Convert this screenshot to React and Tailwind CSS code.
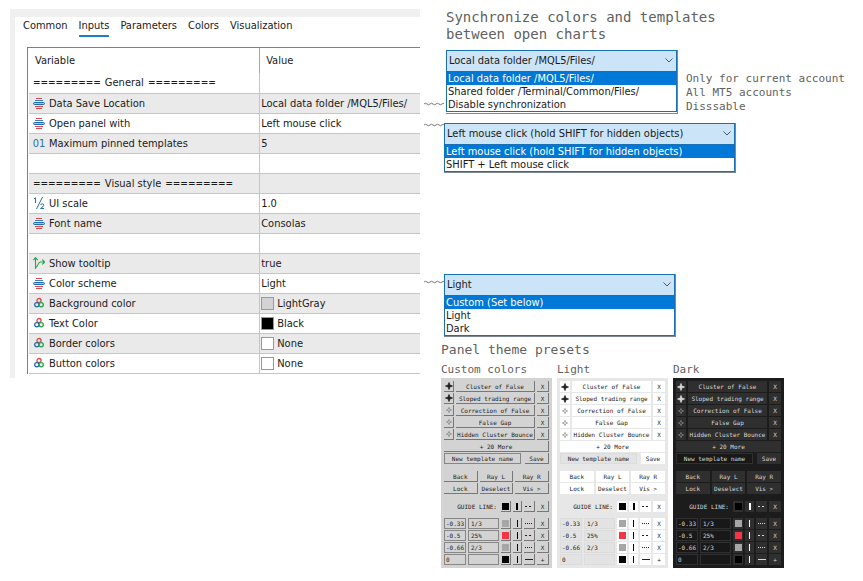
import { useState } from 'react'
import clsx from 'clsx'

const tabs = ['Common', 'Inputs', 'Parameters', 'Colors', 'Visualization']

const inputs = [
  { section: 'General' },
  { icon: 'enum', name: 'Data Save Location', value: 'Local data folder /MQL5/Files/' },
  { icon: 'enum', name: 'Open panel with', value: 'Left mouse click' },
  { icon: 'int', name: 'Maximum pinned templates', value: '5' },
  {},
  { section: 'Visual style' },
  { icon: 'double', name: 'UI scale', value: '1.0' },
  { icon: 'enum', name: 'Font name', value: 'Consolas' },
  {},
  { icon: 'bool', name: 'Show tooltip', value: 'true' },
  { icon: 'enum', name: 'Color scheme', value: 'Light' },
  { icon: 'color', name: 'Background color', value: 'LightGray', swatch: 'bg-[#d3d3d3]' },
  { icon: 'color', name: 'Text Color', value: 'Black', swatch: 'bg-black' },
  { icon: 'color', name: 'Border colors', value: 'None', swatch: 'bg-white' },
  { icon: 'color', name: 'Button colors', value: 'None', swatch: 'bg-white' },
]

const templates = [
  { name: 'Cluster of False', pinned: true },
  { name: 'Sloped trading range', pinned: true },
  { name: 'Correction of False' },
  { name: 'False Gap' },
  { name: 'Hidden Cluster Bounce' },
]

const levels = [
  { level: '-0.33', label: '1/3', color: 'bg-[#a6a6a6]', dash: '1 1', action: 'X' },
  { level: '-0.5', label: '25%', color: 'bg-[#f23645]', dash: '2 2', action: 'X' },
  { level: '-0.66', label: '2/3', color: 'bg-[#a6a6a6]', dash: '1 1', action: 'X' },
  { level: '0', label: '', color: 'bg-black', dash: 'none', action: '+' },
]

const themes = {
  custom: {
    panel: 'bg-[#d3d3d3] text-[#222]',
    button: 'bg-[#d3d3d3] border-r border-b border-[#777]',
    input: 'border border-[#868686]',
    faint: 'text-[#777]',
    bar: 'bg-black',
  },
  light: {
    panel: 'bg-[#e7e7e7] text-[#222]',
    button: 'bg-white',
    input: 'bg-[#e3e3e3] border border-[#dcdcdc]',
    faint: 'text-[#777]',
    bar: 'bg-black',
  },
  dark: {
    panel: 'bg-[#1c1c1c] text-[#d6d6d6]',
    button: 'bg-[#2f2f2f]',
    input: 'bg-[#181818] border border-[#303030]',
    faint: 'text-[#999]',
    bar: 'bg-white',
  },
}

function TypeIcon({ type }) {
  if (type === 'int') return <span className="text-[11px] text-[#2a6fa8]">01</span>
  if (type === 'enum') {
    return (
      <svg viewBox="0 0 12 11" className="w-3 h-[11px]" fill="none">
        <path d="M3 .5h6M2 8.500h8M3 10.500h6" stroke="#d9484c" />
        <path d="M2 2.500h8" stroke="#3b7fbd" />
        <rect x=".5" y="4.500" width="11" height="2" rx="1" fill="#9cc8ea" stroke="#1c6cb0" />
      </svg>
    )
  }
  if (type === 'double') {
    return (
      <svg viewBox="0 0 12 12" className="w-3 h-3" fill="none" stroke="#2a6fa8">
        <path d="M1 2 2.500.8V6M9.500 0 3.500 12M7.500 8c.3-1.600 3.300-1.600 3.300.2 0 1-1 1.600-3.300 3.300H11" />
      </svg>
    )
  }
  if (type === 'bool') {
    return (
      <svg viewBox="0 0 12 12" className="w-3 h-3" fill="none" stroke="#23a646" strokeWidth="1.100">
        <path d="M2.500 12V1M.3 3.200 2.500.7l2.200 2.500M2.800 10.500C5.500 9.500 4.500 5 7.500 5h4M9.200 2.600 11.600 5 9.200 7.400" />
      </svg>
    )
  }
  return (
    <svg viewBox="0 0 12 12" className="w-3 h-3" fill="none" strokeWidth="1.300">
      <circle cx="6" cy="3.600" r="2.100" stroke="#d9484c" />
      <circle cx="3.800" cy="7.800" r="2.100" stroke="#1c6cb0" />
      <circle cx="8.200" cy="7.800" r="2.100" stroke="#23a646" />
    </svg>
  )
}

function Rule() {
  return <span className="text-[10px]">=========</span>
}

function SettingsWindow() {
  const [tab, setTab] = useState('Inputs')

  return (
    <section className="min-w-0 bg-[#f0f0f0] pt-2 pl-[5px]">
      <div className="bg-white pl-3 pb-1">
        <nav className="flex gap-[11px] h-[30px] items-start -ml-1">
          {tabs.map((name) => (
            <button
              key={name}
              onClick={() => setTab(name)}
              className={clsx(
                'h-5 leading-[18px] border-b-2',
                tab === name ? 'border-[#1a7fc4]' : 'border-transparent'
              )}
            >
              {name}
            </button>
          ))}
        </nav>

        <div className="border-t border-l border-[#7f7f88] pl-px">
          <table className="w-full table-fixed border-collapse text-left">
            <thead>
              <tr className="h-[25px]">
                <th className="w-[59%] p-0 pt-[2px] pl-[6px] font-normal border-r border-[#a8a8a8]">Variable</th>
                <th className="p-0 pt-[2px] pl-[6px] font-normal">Value</th>
              </tr>
            </thead>
            <tbody>
              {inputs.map((row, i) => (
                <tr key={i} className={clsx('h-5 border-b border-[#c6c6c6]', i % 2 === 1 && 'bg-[#eaeaea]')}>
                  <td className="p-0 pl-1 border-r border-[#c6c6c6] leading-[19px] whitespace-nowrap">
                    {row.section && (
                      <span className="flex gap-1">
                        <Rule />
                        {row.section}
                        <Rule />
                      </span>
                    )}
                    {row.icon && (
                      <span className="flex items-center gap-1">
                        <span className="w-3 flex justify-center">
                          <TypeIcon type={row.icon} />
                        </span>
                        {row.name}
                      </span>
                    )}
                  </td>
                  <td className="p-0 pl-px leading-[19px] whitespace-nowrap">
                    <span className="flex items-center gap-[3px]">
                      {row.swatch && (
                        <span className={clsx('w-[13px] h-[13px] border border-[#999]', row.swatch)} />
                      )}
                      {row.value}
                    </span>
                  </td>
                </tr>
              ))}
            </tbody>
          </table>
        </div>
      </div>
    </section>
  )
}

function Connector({ className }) {
  return (
    <svg viewBox="0 0 20 4" className={clsx('w-5 h-1 shrink-0', className)} fill="none" stroke="#777">
      <path d="M0 2q1.500-1.500 3 0t3 0 3 0 3 0 3 0 3 0 2 0" />
    </svg>
  )
}

function Dropdown({ label, value, options, selected, width }) {
  return (
    <div className={clsx('shrink-0 border-r border-b border-[#7b8794]', width)}>
      <div className="relative">
        <select
          aria-label={label}
          defaultValue={value}
          className="block w-full h-[22px] pl-[2px] appearance-none border border-[#1a6fb5] bg-[#cce4f7]"
        >
          <option>{value}</option>
        </select>
        <svg viewBox="0 0 8 5" className="absolute right-1 top-2 w-2 h-[5px] pointer-events-none" fill="none" stroke="#555">
          <path d="M.5.5 4 4 7.500.5" />
        </svg>
      </div>
      <ul role="listbox" aria-label={label} className="border border-t-0 border-[#1a6fb5] bg-white">
        {options.map((option) => (
          <li
            key={option}
            role="option"
            aria-selected={option === selected}
            className={clsx(
              'pl-px leading-[13px] whitespace-nowrap',
              option === selected && 'bg-[#0078d7] text-white'
            )}
          >
            {option}
          </li>
        ))}
      </ul>
    </div>
  )
}

function LineButtons({ theme, color, dash, action, thick }) {
  const box = clsx('h-[11px] flex items-center justify-center', theme.button)
  return (
    <>
      <button aria-label="Line color" className={clsx(box, 'w-[10px]')}>
        <span className={clsx('w-[7px] h-[7px]', color)} />
      </button>
      <button aria-label="Line width" className={clsx(box, 'w-[9px]')}>
        <span className={clsx('h-[7px]', theme.bar, thick ? 'w-[2px]' : 'w-px')} />
      </button>
      <button aria-label="Line style" className={clsx(box, 'w-[11px]')}>
        <svg viewBox="0 0 8 1" className="w-2 h-px" stroke="currentColor">
          <path d="M0 .5h8" strokeDasharray={dash} />
        </svg>
      </button>
      <button className={clsx(box, 'w-3')}>{action}</button>
    </>
  )
}

function ThemePanel({ theme }) {
  const button = clsx('h-[11px] flex items-center justify-center whitespace-nowrap', theme.button)
  return (
    <div className={clsx('flex flex-col gap-px p-[3px] text-[6px] leading-[9px]', theme.panel)}>
      {templates.map((item) => (
        <div key={item.name} className="flex gap-[2px]">
          <button aria-label="Pin template" className={clsx(button, 'w-[10px]')}>
            <svg viewBox="0 0 8 8" className={clsx(item.pinned ? 'w-2 h-2' : 'w-[6px] h-[6px]', !item.pinned && theme.faint)}>
              <path
                d="M4 .5 4.900 3.100 7.500 4 4.900 4.900 4 7.500 3.100 4.900.5 4 3.100 3.100Z"
                fill={item.pinned ? 'currentColor' : 'none'}
                stroke="currentColor"
                strokeWidth=".8"
              />
            </svg>
          </button>
          <button className={clsx(button, 'flex-1')}>{item.name}</button>
          <button className={clsx(button, 'w-3')}>X</button>
        </div>
      ))}
      <button className={button}>+ 20 More</button>
      <div className="flex gap-1">
        <input
          aria-label="New template name"
          defaultValue="New template name"
          className={clsx('min-w-0 flex-1 h-[11px] text-center', theme.input)}
        />
        <button className={clsx(button, 'w-6')}>Save</button>
      </div>

      <div className="grid grid-cols-3 gap-x-[2px] gap-y-px mt-[6px]">
        {['Back', 'Ray L', 'Ray R', 'Lock', 'Deselect', 'Vis >'].map((name) => (
          <button key={name} className={button}>{name}</button>
        ))}
      </div>

      <div className="flex items-center justify-end gap-[2px] mt-[6px] mb-[5px]">
        <span className="pr-[2px]">GUIDE LINE:</span>
        <LineButtons theme={theme} color="bg-black" dash="2 2" action="X" thick />
      </div>

      {levels.map((row) => (
        <div key={row.level} className="flex gap-[2px]">
          <input aria-label="Level" defaultValue={row.level} className={clsx('w-[22px] h-[11px] pl-px', theme.input)} />
          <input
            aria-label="Level label"
            defaultValue={row.label}
            className={clsx('min-w-0 flex-1 h-[11px] pl-[2px]', theme.input)}
          />
          <LineButtons theme={theme} color={row.color} dash={row.dash} action={row.action} />
        </div>
      ))}
    </div>
  )
}

function App() {
  return (
    <main className="grid grid-cols-[410fr_443fr] items-start pt-[9px] pl-[10px] bg-white text-[11px] text-[#1a1a1a] font-['DejaVu_Sans_Condensed','DejaVu_Sans',sans-serif]">
      <SettingsWindow />

      <section className="min-w-0 pl-1">
        <h1 className="pl-[22px] text-[14px] leading-[17px] text-[#5f5f5f] font-['DejaVu_Sans_Mono',monospace]">
          Synchronize colors and templates
          <br />
          between open charts
        </h1>

        <div className="flex mt-[7px]">
          <Connector className="mt-[52px] mr-[2px]" />
          <Dropdown
            label="Data Save Location"
            value="Local data folder /MQL5/Files/"
            selected="Local data folder /MQL5/Files/"
            options={['Local data folder /MQL5/Files/', 'Shared folder /Terminal/Common/Files/', 'Disable synchronization']}
            width="w-[232px]"
          />
          <p className="pl-2 pt-[22px] text-[11px] leading-[14px] text-[#5f5f5f] whitespace-nowrap font-['DejaVu_Sans_Mono',monospace]">
            Only for current account
            <br />
            All MT5 accounts
            <br />
            Disssable
          </p>
        </div>

        <div className="flex mt-[9px]">
          <Connector />
          <Dropdown
            label="Open panel with"
            value="Left mouse click (hold SHIFT for hidden objects)"
            selected="Left mouse click (hold SHIFT for hidden objects)"
            options={['Left mouse click (hold SHIFT for hidden objects)', 'SHIFT + Left mouse click']}
            width="w-[292px]"
          />
        </div>

        <div className="flex mt-[101px]">
          <Connector className="mt-[6px]" />
          <Dropdown
            label="Color scheme"
            value="Light"
            selected="Custom (Set below)"
            options={['Custom (Set below)', 'Light', 'Dark']}
            width="w-[232px]"
          />
        </div>

        <div className="pl-[17px] mt-1 text-[#5f5f5f] font-['DejaVu_Sans_Mono',monospace]">
          <h2 className="mb-1 text-[13px] leading-[17px]">Panel theme presets</h2>
          <div className="flex gap-[5px]">
            {[
              ['Custom colors', themes.custom],
              ['Light', themes.light],
              ['Dark', themes.dark],
            ].map(([title, theme]) => (
              <figure key={title} className="w-[111px]">
                <figcaption className="text-[11px] leading-4">{title}</figcaption>
                <ThemePanel theme={theme} />
              </figure>
            ))}
          </div>
        </div>
      </section>
    </main>
  )
}

export default App
